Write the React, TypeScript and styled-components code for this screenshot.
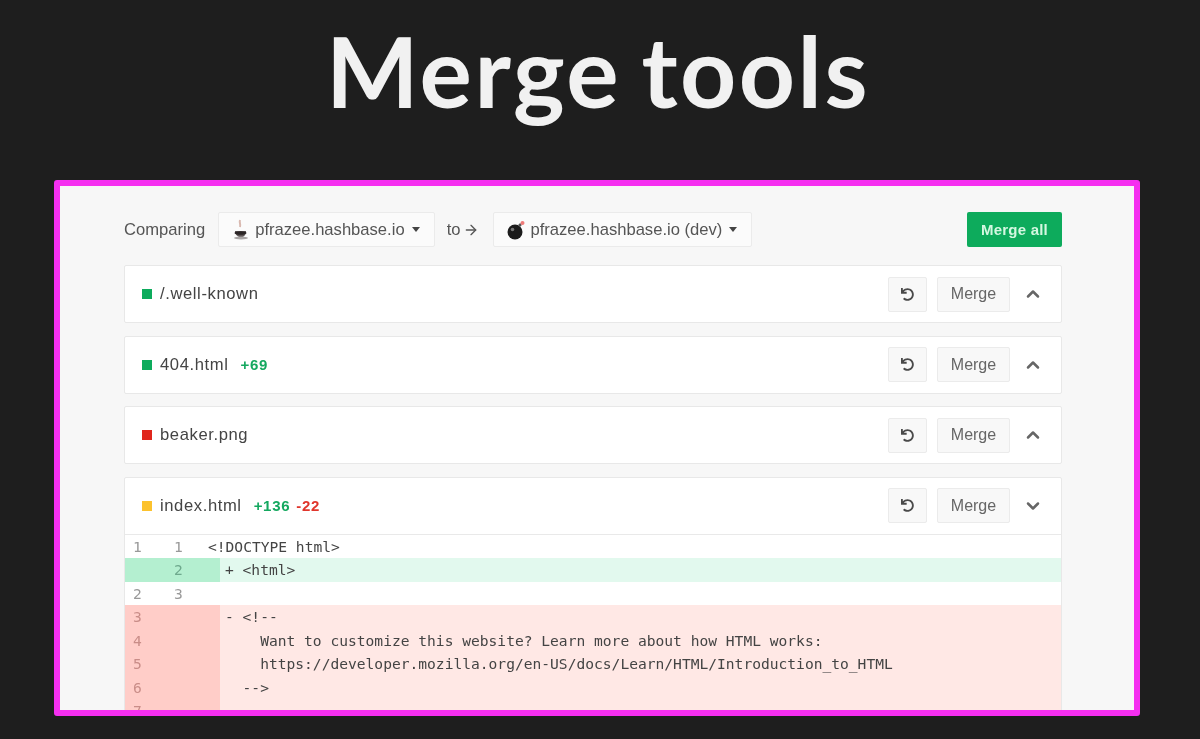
import React from 'react';
import styled, { createGlobalStyle } from 'styled-components';
import { ArrowRight, ChevronDown, ChevronUp } from 'lucide-react';
import { FaUndo } from 'react-icons/fa';

const GlobalStyle = createGlobalStyle`
  html, body {
    margin: 0;
    height: 739px;
    overflow: hidden;
    background: #1e1e1e;
  }
`;

const Page = styled.div`
  height: 739px;
  padding-left: 54px;
  box-sizing: border-box;
  overflow: hidden;
`;

const Title = styled.h1`
  height: 180px;
  margin: 0 0 0 -54px;
  padding: 12px 4px 0 0;
  box-sizing: border-box;
  text-align: center;
  font-family: Lato, sans-serif;
  font-size: 98px;
  line-height: 117.6px;
  font-weight: 700;
  letter-spacing: 2.5px;
  word-spacing: -6px;
  color: #f1f1f1;
  filter: blur(0.6px);
`;

const Frame = styled.div`
  width: 1086px;
  height: 536px;
  box-sizing: border-box;
  border: 6px solid #f52ff0;
  border-radius: 3px;
  background: #f7f7f7;
  padding: 26px 72px 0 64px;
  overflow: hidden;
  font-family: 'Liberation Sans', Arial, sans-serif;
  filter: blur(0.45px);
`;

const Toolbar = styled.div`
  display: flex;
  align-items: center;
  height: 35px;
  margin-bottom: 18px;
  font-size: 16.6px;
  color: #555;
`;

const Label = styled.span`
  margin-right: 13px;
`;

const Select = styled.div`
  display: flex;
  align-items: center;
  height: 35px;
  box-sizing: border-box;
  padding: 0 14px 0 12px;
  background: #fbfbfb;
  border: 1px solid #ebebeb;
  border-radius: 2px;
  color: #555;
`;

const SelectIcon = styled.svg`
  width: 20px;
  height: 22px;
  margin-right: 4px;
  flex: none;
`;

const Caret = styled.i`
  width: 0;
  height: 0;
  margin-left: 7px;
  border-left: 4px solid transparent;
  border-right: 4px solid transparent;
  border-top: 5px solid #444;
`;

const To = styled.span`
  display: flex;
  align-items: center;
  margin: 0 14px 0 12px;
  gap: 3px;
`;

const MergeAll = styled.button`
  margin-left: auto;
  width: 95px;
  height: 35px;
  padding: 0;
  border: 0;
  border-radius: 2px;
  background: #0dab5c;
  color: #d4f7e1;
  font: 700 15px 'Liberation Sans', Arial, sans-serif;
  letter-spacing: 0.2px;
`;

const Card = styled.div`
  background: #fff;
  border: 1px solid #e8e8e8;
  border-radius: 2px;
  margin-bottom: 12.5px;
`;

const CardHead = styled.div`
  display: flex;
  align-items: center;
  height: 56px;
  padding: 0 16px 0 17px;
  font-size: 16.6px;
  color: #444;
`;

const Dot = styled.span<{ $color: string }>`
  width: 10px;
  height: 10px;
  margin-right: 8px;
  background: ${(p) => p.$color};
`;

const FileName = styled.span`
  letter-spacing: 0.6px;
`;

const Stat = styled.span<{ $color: string }>`
  margin-left: 6px;
  font-size: 15px;
  font-weight: 700;
  letter-spacing: 0.7px;
  color: ${(p) => p.$color};
  ${FileName} + & {
    margin-left: 12px;
  }
`;

const Actions = styled.div`
  display: flex;
  align-items: center;
  margin-left: auto;
  gap: 10px;
`;

const ActionButton = styled.button<{ $width: number }>`
  display: flex;
  align-items: center;
  justify-content: center;
  width: ${(p) => p.$width}px;
  height: 35px;
  padding: 0;
  background: #f8f8f8;
  border: 1px solid #ebebeb;
  border-radius: 2px;
  color: #666;
  font: 16px 'Liberation Sans', Arial, sans-serif;
`;

const UndoIcon = styled(FaUndo)`
  width: 13px;
  height: 13px;
  color: #4a4a4a;
`;

const Toggle = styled.span`
  display: flex;
  justify-content: center;
  width: 24px;
  margin-left: 1px;
  color: #666;
`;

const Diff = styled.div`
  border-top: 1px solid #e9e9e9;
  font-family: 'DejaVu Sans Mono', monospace;
  font-size: 14.6px;
  color: #444;
`;

const palette = {
  context: { gutter: '#fff', code: '#fff', width: 83, pad: 0, num: '#999' },
  add: { gutter: '#b4efd0', code: '#e2f9ee', width: 95, pad: 5, num: '#6ea98d' },
  del: { gutter: '#ffcdc8', code: '#ffe8e5', width: 95, pad: 5, num: '#c98d88' },
};

type Kind = keyof typeof palette;

const Line = styled.div<{ $kind: Kind }>`
  display: flex;
  height: 23.5px;
  line-height: 23.5px;
  white-space: pre;
  background: ${(p) => palette[p.$kind].code};
`;

const Gutter = styled.div<{ $kind: Kind }>`
  display: flex;
  flex: none;
  box-sizing: border-box;
  width: ${(p) => palette[p.$kind].width}px;
  padding-left: 8px;
  background: ${(p) => palette[p.$kind].gutter};
  color: ${(p) => palette[p.$kind].num};
`;

const Num = styled.span`
  flex: none;
  width: 41px;
`;

const Code = styled.div<{ $kind: Kind }>`
  padding-left: ${(p) => palette[p.$kind].pad}px;
`;

const CoffeeIcon = () => (
  <SelectIcon viewBox="0 0 20 22">
    <path d="M9 1c-1 3 1 4 0 7" stroke="#d9b9b0" strokeWidth="2" fill="none" />
    <path d="M4 12h11c0 4-2 6-5 6s-6-2-6-6z" fill="#5b5354" />
    <ellipse cx="9.5" cy="14" rx="6" ry="1.8" fill="#2b2526" />
    <ellipse cx="10" cy="19" rx="7" ry="1.5" fill="#a9a5a5" />
  </SelectIcon>
);

const BombIcon = () => (
  <SelectIcon viewBox="0 0 20 22">
    <circle cx="9" cy="13" r="7.5" fill="#1c1c1c" />
    <circle cx="6.5" cy="10.5" r="1.8" fill="#777" />
    <path d="M13 7l2-2" stroke="#555" strokeWidth="2.5" />
    <circle cx="16.5" cy="4" r="2" fill="#ef7a78" />
  </SelectIcon>
);

const files = [
  { name: '/.well-known', color: '#0dab5c', open: false, stats: [] },
  { name: '404.html', color: '#0dab5c', open: false, stats: [['+69', '#14a85f']] },
  { name: 'beaker.png', color: '#e0261c', open: false, stats: [] },
  {
    name: 'index.html',
    color: '#fcc22d',
    open: true,
    stats: [
      ['+136', '#14a85f'],
      ['-22', '#e0362c'],
    ],
  },
];

const lines: { kind: Kind; a: string; b: string; text: string }[] = [
  { kind: 'context', a: '1', b: '1', text: '<!DOCTYPE html>' },
  { kind: 'add', a: '', b: '2', text: '+ <html>' },
  { kind: 'context', a: '2', b: '3', text: '' },
  { kind: 'del', a: '3', b: '', text: '- <!--' },
  { kind: 'del', a: '4', b: '', text: '    Want to customize this website? Learn more about how HTML works:' },
  { kind: 'del', a: '5', b: '', text: '    https://developer.mozilla.org/en-US/docs/Learn/HTML/Introduction_to_HTML' },
  { kind: 'del', a: '6', b: '', text: '  -->' },
  { kind: 'del', a: '7', b: '', text: '' },
];

export default function App() {
  return (
    <Page>
      <GlobalStyle />
      <Title>Merge tools</Title>
      <Frame>
        <Toolbar>
          <Label>Comparing</Label>
          <Select>
            <CoffeeIcon />
            pfrazee.hashbase.io
            <Caret />
          </Select>
          <To>
            to
            <ArrowRight size={16} strokeWidth={2} />
          </To>
          <Select>
            <BombIcon />
            pfrazee.hashbase.io (dev)
            <Caret />
          </Select>
          <MergeAll>Merge all</MergeAll>
        </Toolbar>
        {files.map((file) => (
          <Card key={file.name}>
            <CardHead>
              <Dot $color={file.color} />
              <FileName>{file.name}</FileName>
              {file.stats.map(([label, color]) => (
                <Stat key={label} $color={color}>
                  {label}
                </Stat>
              ))}
              <Actions>
                <ActionButton $width={39}>
                  <UndoIcon />
                </ActionButton>
                <ActionButton $width={73}>Merge</ActionButton>
                <Toggle>
                  {file.open ? (
                    <ChevronDown size={20} strokeWidth={3} />
                  ) : (
                    <ChevronUp size={20} strokeWidth={3} />
                  )}
                </Toggle>
              </Actions>
            </CardHead>
            {file.open && (
              <Diff>
                {lines.map((line, i) => (
                  <Line key={i} $kind={line.kind}>
                    <Gutter $kind={line.kind}>
                      <Num>{line.a}</Num>
                      <Num>{line.b}</Num>
                    </Gutter>
                    <Code $kind={line.kind}>{line.text}</Code>
                  </Line>
                ))}
              </Diff>
            )}
          </Card>
        ))}
      </Frame>
    </Page>
  );
}
